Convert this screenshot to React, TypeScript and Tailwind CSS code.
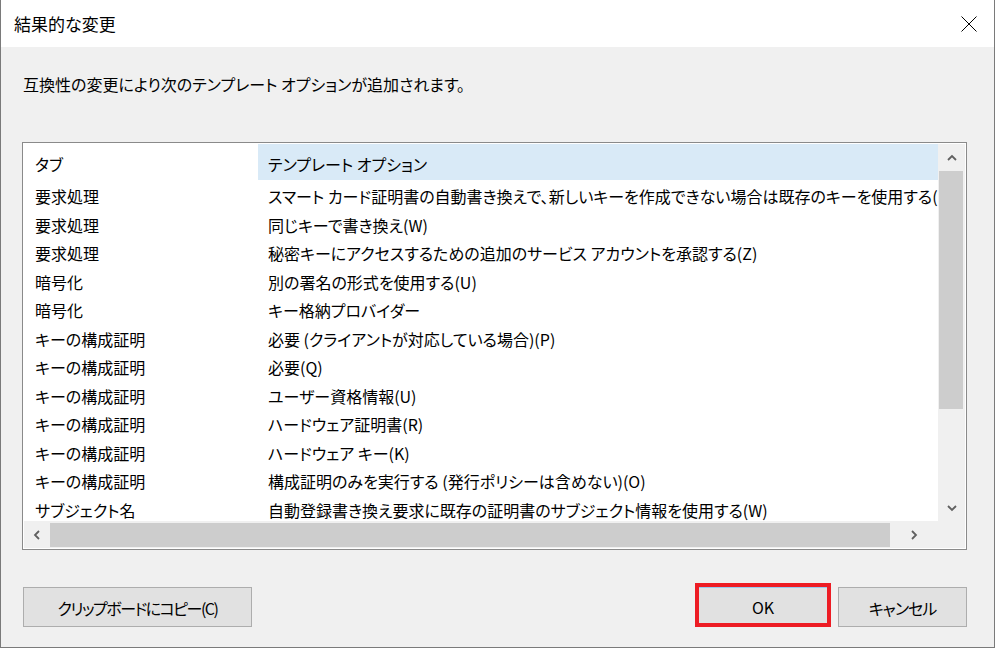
import React from "react";

const rows: [string, string][] = [
  ["要求処理", "スマート カード証明書の自動書き換えで、新しいキーを作成できない場合は既存のキーを使用する(I)"],
  ["要求処理", "同じキーで書き換え(W)"],
  ["要求処理", "秘密キーにアクセスするための追加のサービス アカウントを承認する(Z)"],
  ["暗号化", "別の署名の形式を使用する(U)"],
  ["暗号化", "キー格納プロバイダー"],
  ["キーの構成証明", "必要 (クライアントが対応している場合)(P)"],
  ["キーの構成証明", "必要(Q)"],
  ["キーの構成証明", "ユーザー資格情報(U)"],
  ["キーの構成証明", "ハードウェア証明書(R)"],
  ["キーの構成証明", "ハードウェア キー(K)"],
  ["キーの構成証明", "構成証明のみを実行する (発行ポリシーは含めない)(O)"],
  ["サブジェクト名", "自動登録書き換え要求に既存の証明書のサブジェクト情報を使用する(W)"],
];

function Chevron({ dir }: { dir: "up" | "down" | "left" | "right" }) {
  const pts: Record<string, string> = {
    up: "1,6 5,2 9,6",
    down: "1,2 5,6 9,2",
    left: "6,1 2,5 6,9",
    right: "2,1 6,5 2,9",
  };
  const vertical = dir === "up" || dir === "down";
  return (
    <svg
      width={vertical ? 10 : 8}
      height={vertical ? 8 : 10}
      viewBox={vertical ? "0 0 10 8" : "0 0 8 10"}
      className="block"
    >
      <polyline points={pts[dir]} fill="none" stroke="#606060" strokeWidth="1.8" />
    </svg>
  );
}

export default function App() {
  return (
    <div className="w-[995px] h-[648px] flex flex-col bg-[#f0f0f0] border-l border-r border-b border-[#7a7a7a] font-['Noto_Sans_CJK_JP','Noto_Sans',sans-serif] [font-feature-settings:'palt'] text-black overflow-hidden">
      {/* Title bar */}
      <div className="h-[47px] shrink-0 bg-white flex items-center justify-between pl-[13px] pr-[17px]">
        <span className="text-[17px] leading-none">結果的な変更</span>
        <svg width="16" height="16" viewBox="0 0 16 16" className="block">
          <path d="M0.5 0.5 L15.5 15.5 M15.5 0.5 L0.5 15.5" stroke="#000" strokeWidth="1" fill="none" />
        </svg>
      </div>

      {/* Body */}
      <div className="flex-1 flex flex-col pl-[21px]">
        <div className="mt-[25px] pl-[1px] text-[16px] leading-[24px]">
          互換性の変更により次のテンプレート オプションが追加されます。
        </div>

        {/* List box */}
        <div className="mt-[46px] w-[945px] h-[408px] border border-[#8a8a8a] bg-white p-[1px] flex flex-col">
          <div className="flex h-[377px]">
            <div className="w-[914px] overflow-hidden text-[16px]">
              <div className="flex h-[36px]">
                <div className="w-[234px] shrink-0 pl-[11px] pt-[4px] flex items-center">タブ</div>
                <div className="flex-1 bg-[#d9eaf7] pl-[10px] pt-[4px] flex items-center">テンプレート オプション</div>
              </div>
              {rows.map(([tab, opt], i) => (
                <div key={i} className="flex h-[28.5px] items-center pt-[4px]">
                  <div className="w-[234px] shrink-0 pl-[11px] whitespace-nowrap">{tab}</div>
                  <div className="flex-1 pl-[10px] whitespace-nowrap overflow-hidden">{opt}</div>
                </div>
              ))}
            </div>
            {/* Vertical scrollbar */}
            <div className="w-[27px] bg-[#f0f0f0] flex flex-col">
              <div className="h-[27px] flex items-center justify-center">
                <Chevron dir="up" />
              </div>
              <div className="h-[238px] ml-[1px] mr-[2px] bg-[#cdcdcd]" />
              <div className="flex-1" />
              <div className="h-[27px] flex items-center justify-center">
                <Chevron dir="down" />
              </div>
            </div>
          </div>
          {/* Horizontal scrollbar */}
          <div className="flex flex-1">
            <div className="w-[914px] bg-[#f0f0f0] flex items-center">
              <div className="w-[26px] h-full flex items-center justify-center">
                <Chevron dir="left" />
              </div>
              <div className="w-[840px] h-[24px] bg-[#cdcdcd]" />
              <div className="flex-1 h-full flex items-center justify-center">
                <Chevron dir="right" />
              </div>
            </div>
            <div className="flex-1 bg-[#f0f0f0]" />
          </div>
        </div>

        {/* Buttons */}
        <div className="mt-[33px] w-[945px] flex items-end justify-between">
          <button className="ml-[1px] w-[229px] h-[40px] bg-[#e1e1e1] border border-[#adadad] text-[16px] tracking-[-1.5px] pt-[2px] flex items-center justify-center">
            クリップボードにコピー(C)
          </button>
          <div className="flex items-end gap-[7px]">
            <div className="border-[4px] border-[#ed1c24]">
              <button className="w-[128px] h-[36px] bg-[#e1e1e1] border-t border-[#99c9ef] text-[16px] pt-[2px] flex items-center justify-center">
                OK
              </button>
            </div>
            <button className="w-[129px] h-[40px] bg-[#e1e1e1] border border-[#adadad] text-[16px] tracking-[-1px] pt-[2px] flex items-center justify-center">
              キャンセル
            </button>
          </div>
        </div>
      </div>
    </div>
  );
}
